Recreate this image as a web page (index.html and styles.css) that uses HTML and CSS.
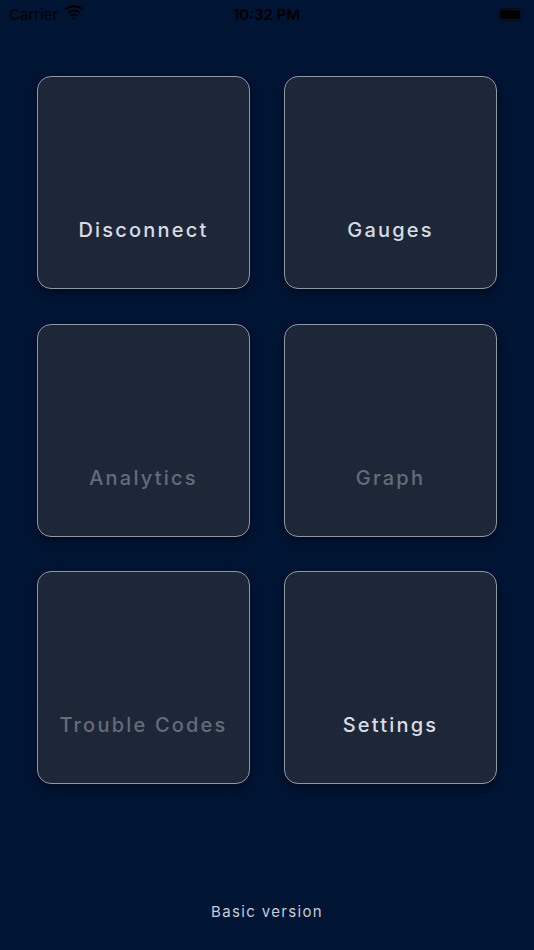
FILE: index.html
```html
<!DOCTYPE html>
<html lang="en">
<head>
<meta charset="utf-8">
<title>Dashboard</title>
<link rel="stylesheet" href="styles.css">
</head>
<body>
<div class="screen">
  <header class="status-bar">
    <div class="status-left">
      <span class="carrier">Carrier</span>
      <svg class="wifi" width="20" height="15" viewBox="0 0 20 15" aria-hidden="true">
        <path d="M10 2.2c3.3 0 6.3 1.3 8.5 3.4l1.3-1.4C17.2 1.6 13.7 0 10 0S2.8 1.6.2 4.2l1.3 1.4C3.7 3.5 6.7 2.2 10 2.2z" fill="#000"/>
        <path d="M10 6.5c2.1 0 4 .8 5.4 2.2l1.4-1.4C15 5.5 12.6 4.4 10 4.4S5 5.5 3.2 7.3l1.4 1.4C6 7.3 7.9 6.5 10 6.5z" fill="#000"/>
        <path d="M10 10.6c1 0 1.9.4 2.5 1l1.5-1.4C12.9 9.2 11.5 8.6 10 8.6s-2.9.6-4 1.6l1.5 1.4c.6-.6 1.5-1 2.5-1z" fill="#000"/>
        <path d="M10 15l2-2c-.5-.5-1.2-.8-2-.8s-1.5.3-2 .8z" fill="#000"/>
      </svg>
    </div>
    <span class="time">10:32 PM</span>
    <div class="status-right">
      <svg class="battery" width="27" height="13" viewBox="0 0 27 13" aria-hidden="true">
        <rect x="0.5" y="0.5" width="23" height="12" rx="3.5" fill="none" stroke="#000" stroke-opacity="0.4"/>
        <rect x="2" y="2" width="20" height="9" rx="2" fill="#000"/>
        <path d="M25 4.5v4c.8-.3 1.3-1.1 1.3-2s-.5-1.7-1.3-2z" fill="#000" fill-opacity="0.4"/>
      </svg>
    </div>
  </header>

  <main class="grid">
    <button class="tile">Disconnect</button>
    <button class="tile">Gauges</button>
    <button class="tile disabled">Analytics</button>
    <button class="tile disabled">Graph</button>
    <button class="tile disabled">Trouble Codes</button>
    <button class="tile">Settings</button>
  </main>

  <footer class="footer">Basic version</footer>
</div>
</body>
</html>
```

FILE: styles.css
```css
* { box-sizing: border-box; }

html, body {
  margin: 0;
  padding: 0;
  background: #001433;
}

.screen {
  width: 534px;
  height: 950px;
  display: flex;
  flex-direction: column;
  background: #001433;
  font-family: Inter, "Liberation Sans", sans-serif;
}

.status-bar {
  height: 28px;
  display: grid;
  grid-template-columns: 1fr auto 1fr;
  align-items: center;
  padding: 0 10px 0 9px;
  color: #000;
  font-size: 15px;
}

.status-left {
  display: flex;
  align-items: center;
  gap: 6px;
}

.carrier {
  font-weight: 400;
}

.wifi { margin-top: -4px; }

.time {
  font-weight: 600;
}

.status-right {
  display: flex;
  justify-content: flex-end;
}

.battery { margin-right: -1px; }

.grid {
  display: grid;
  grid-template-columns: 213px 213px;
  grid-auto-rows: 213px;
  gap: 34.5px 34px;
  padding: 48px 37px 0;
}

.tile {
  display: flex;
  align-items: flex-end;
  justify-content: center;
  padding: 0 0 46px;
  background: #1e2738;
  border: 1px solid #9298a3;
  border-radius: 14px;
  box-shadow: 0 4px 8px rgba(0, 0, 0, 0.35);
  color: #d8dce3;
  font-family: Inter, "Liberation Sans", sans-serif;
  font-size: 20px;
  font-weight: 500;
  letter-spacing: 2.2px;
  cursor: pointer;
}

.tile.disabled {
  color: #646c79;
}

.footer {
  margin-top: auto;
  padding-bottom: 29px;
  text-align: center;
  color: #c7ccd6;
  font-size: 15px;
  letter-spacing: 1.35px;
}
```
